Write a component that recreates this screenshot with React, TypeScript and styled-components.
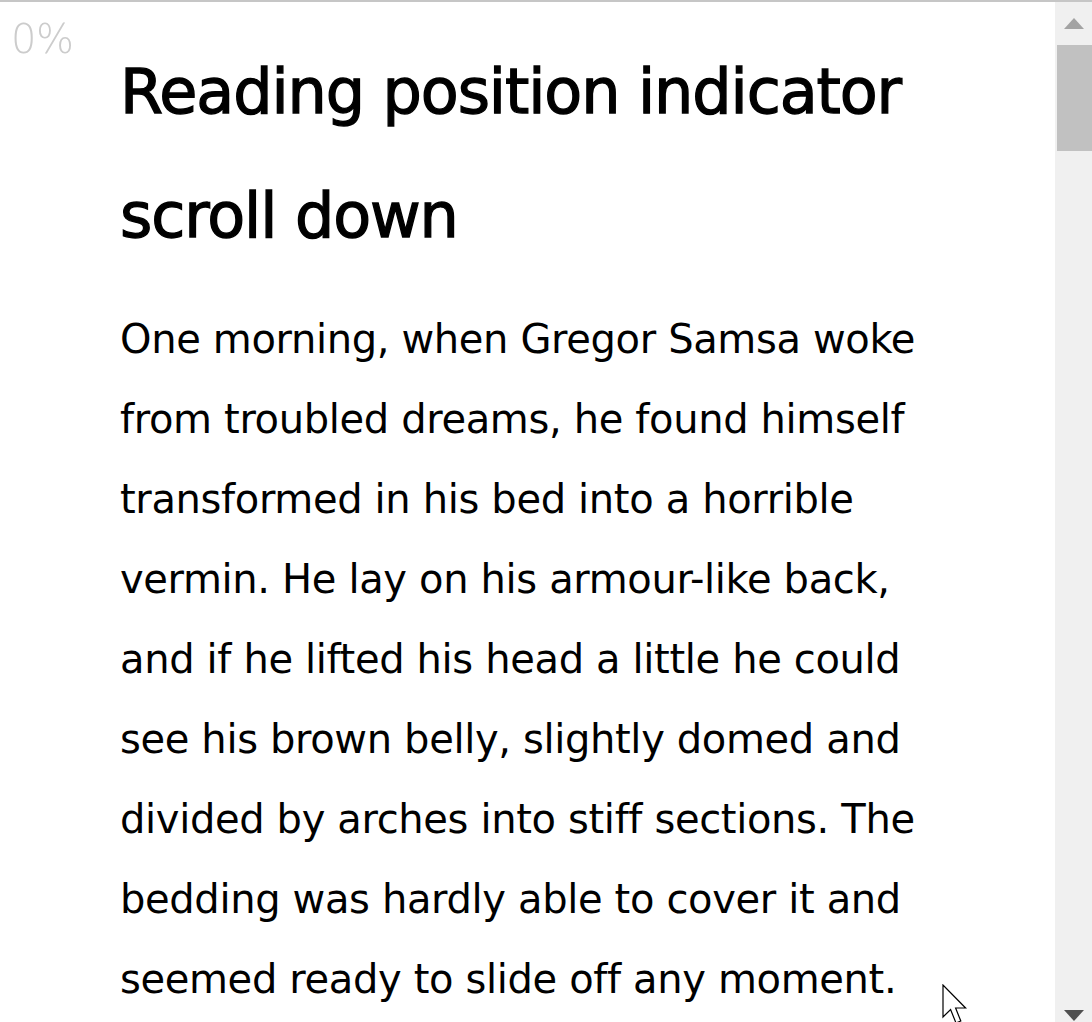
import React from "react";
import styled, { createGlobalStyle } from "styled-components";

const GlobalStyle = createGlobalStyle`
  html, body {
    margin: 0;
    padding: 0;
    height: 100%;
    overflow: hidden;
    background: #ffffff;
  }
  body {
    font-family: "DejaVu Sans", "Noto Sans", sans-serif;
    color: #000;
  }
`;

const Frame = styled.div`
  position: relative;
  display: flex;
  height: 1022px;
  box-sizing: border-box;
  border-top: 2px solid #c6c6c6;
  background: #fff;
`;

const Content = styled.main`
  flex: 1;
  min-width: 0;
  padding: 0 0 0 120px;
  overflow: hidden;
`;

const Title = styled.h1`
  margin: 28px 0 0;
  font-size: 62px;
  line-height: 124px;
  font-weight: 400;
  letter-spacing: -1.1px;
  -webkit-text-stroke: 1.3px #000;
  white-space: nowrap;
`;

const Paragraph = styled.p`
  margin: 21px 0 0;
  font-size: 40px;
  line-height: 80px;
  font-weight: 400;
  letter-spacing: -0.35px;
  white-space: nowrap;
`;

const Progress = styled.div`
  position: fixed;
  left: 11px;
  top: 17px;
  font-family: "DejaVu Sans", sans-serif;
  font-size: 40px;
  font-weight: 200;
  color: #cccccc;
  line-height: 44px;
  letter-spacing: -0.5px;
`;

const Scrollbar = styled.div`
  width: 37px;
  flex: none;
  background: #f0f0f0;
  display: flex;
  flex-direction: column;
`;

const ArrowButton = styled.div<{ $dark?: boolean }>`
  height: 43px;
  display: flex;
  align-items: ${(p) => (p.$dark ? "flex-end" : "center")};
  justify-content: center;
  padding-bottom: ${(p) => (p.$dark ? "1px" : "0")};
  svg {
    display: block;
  }
`;

const Track = styled.div`
  flex: 1;
  display: flex;
  flex-direction: column;
`;

const Thumb = styled.div`
  margin-left: 2px;
  height: 106px;
  background: #c1c1c1;
`;

const Cursor = styled.svg`
  position: absolute;
  left: 942px;
  top: 982px;
`;

const lines = [
  "One morning, when Gregor Samsa woke",
  "from troubled dreams, he found himself",
  "transformed in his bed into a horrible",
  "vermin. He lay on his armour-like back,",
  "and if he lifted his head a little he could",
  "see his brown belly, slightly domed and",
  "divided by arches into stiff sections. The",
  "bedding was hardly able to cover it and",
  "seemed ready to slide off any moment.",
];

export default function App() {
  return (
    <>
      <GlobalStyle />
      <Frame>
        <Content>
          <Title>
            Reading position indicator
            <br />
            scroll down
          </Title>
          <Paragraph>
            {lines.map((l, i) => (
              <React.Fragment key={i}>
                {l}
                {i < lines.length - 1 && <br />}
              </React.Fragment>
            ))}
          </Paragraph>
        </Content>
        <Scrollbar>
          <ArrowButton>
            <svg width="20" height="11" viewBox="0 0 20 11">
              <polygon points="10,0 20,11 0,11" fill="#a3a3a3" />
            </svg>
          </ArrowButton>
          <Track>
            <Thumb />
          </Track>
          <ArrowButton $dark>
            <svg width="20" height="11" viewBox="0 0 20 11">
              <polygon points="0,0 20,0 10,11" fill="#505050" />
            </svg>
          </ArrowButton>
        </Scrollbar>
        <Progress>0%</Progress>
        <Cursor width="26" height="42" viewBox="0 0 13 21">
          <path
            d="M0.5 0.5 L0.5 16.5 L4.3 12.8 L7 19.5 L9.4 18.5 L6.8 12 L11.8 12 Z"
            fill="#ffffff"
            stroke="#000000"
            strokeWidth="0.6"
            strokeLinejoin="miter"
          />
        </Cursor>
      </Frame>
    </>
  );
}
